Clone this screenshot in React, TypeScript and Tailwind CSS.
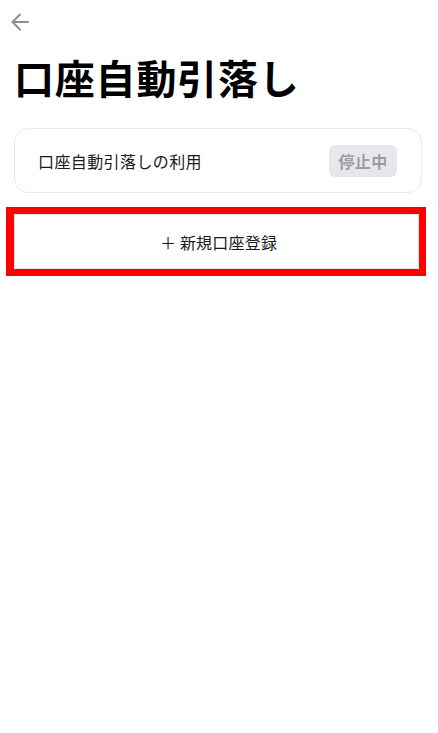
import React from "react";

export default function App() {
  return (
    <div className="w-[438px] h-[733px] bg-white text-[#111111] font-['Noto_Sans_CJK_JP','Noto_Sans',sans-serif]">
      <div className="h-[44px] flex items-center pl-[11px]">
        <svg width="18" height="18" viewBox="0 0 18 18" fill="none" stroke="#8a8e96" strokeWidth="2" strokeLinecap="round" strokeLinejoin="round">
          <path d="M17 9H1.5" />
          <path d="M9 1.5L1.5 9L9 16.5" />
        </svg>
      </div>
      <h1 className="px-[14px] pt-[9px] text-[40px] leading-[48px] font-bold text-black tracking-[0.8px]">口座自動引落し</h1>
      <div className="pl-[14px] pr-[16px] pt-[27px]">
        <div className="flex items-center justify-between h-[65px] border border-[#e8e8ea] rounded-[14px] pl-[23px] pr-[24px]">
          <span className="text-[16px] text-[#1a1a1a] tracking-[0.4px]">口座自動引落しの利用</span>
          <span className="rounded-[6px] bg-[#e6e7ea] w-[68px] justify-center h-[32px] flex items-center text-[16px] font-bold text-[#9a9ca2] tracking-[0.3px]">停止中</span>
        </div>
        <div className="relative mt-[21px] mr-[3px]">
          <button className="w-full h-[55px] flex items-center justify-center border border-[#e2e2e4] rounded-[4px] bg-white text-[16px] text-[#1a1a1a] tracking-[0.2px] pl-[4px]">
            ＋ 新規口座登録
          </button>
          <div className="absolute left-[-8px] right-[-7px] top-[-7px] bottom-[-7px] border-[7px] border-l-[8px] border-[#ff0000] pointer-events-none" />
        </div>
      </div>
    </div>
  );
}
